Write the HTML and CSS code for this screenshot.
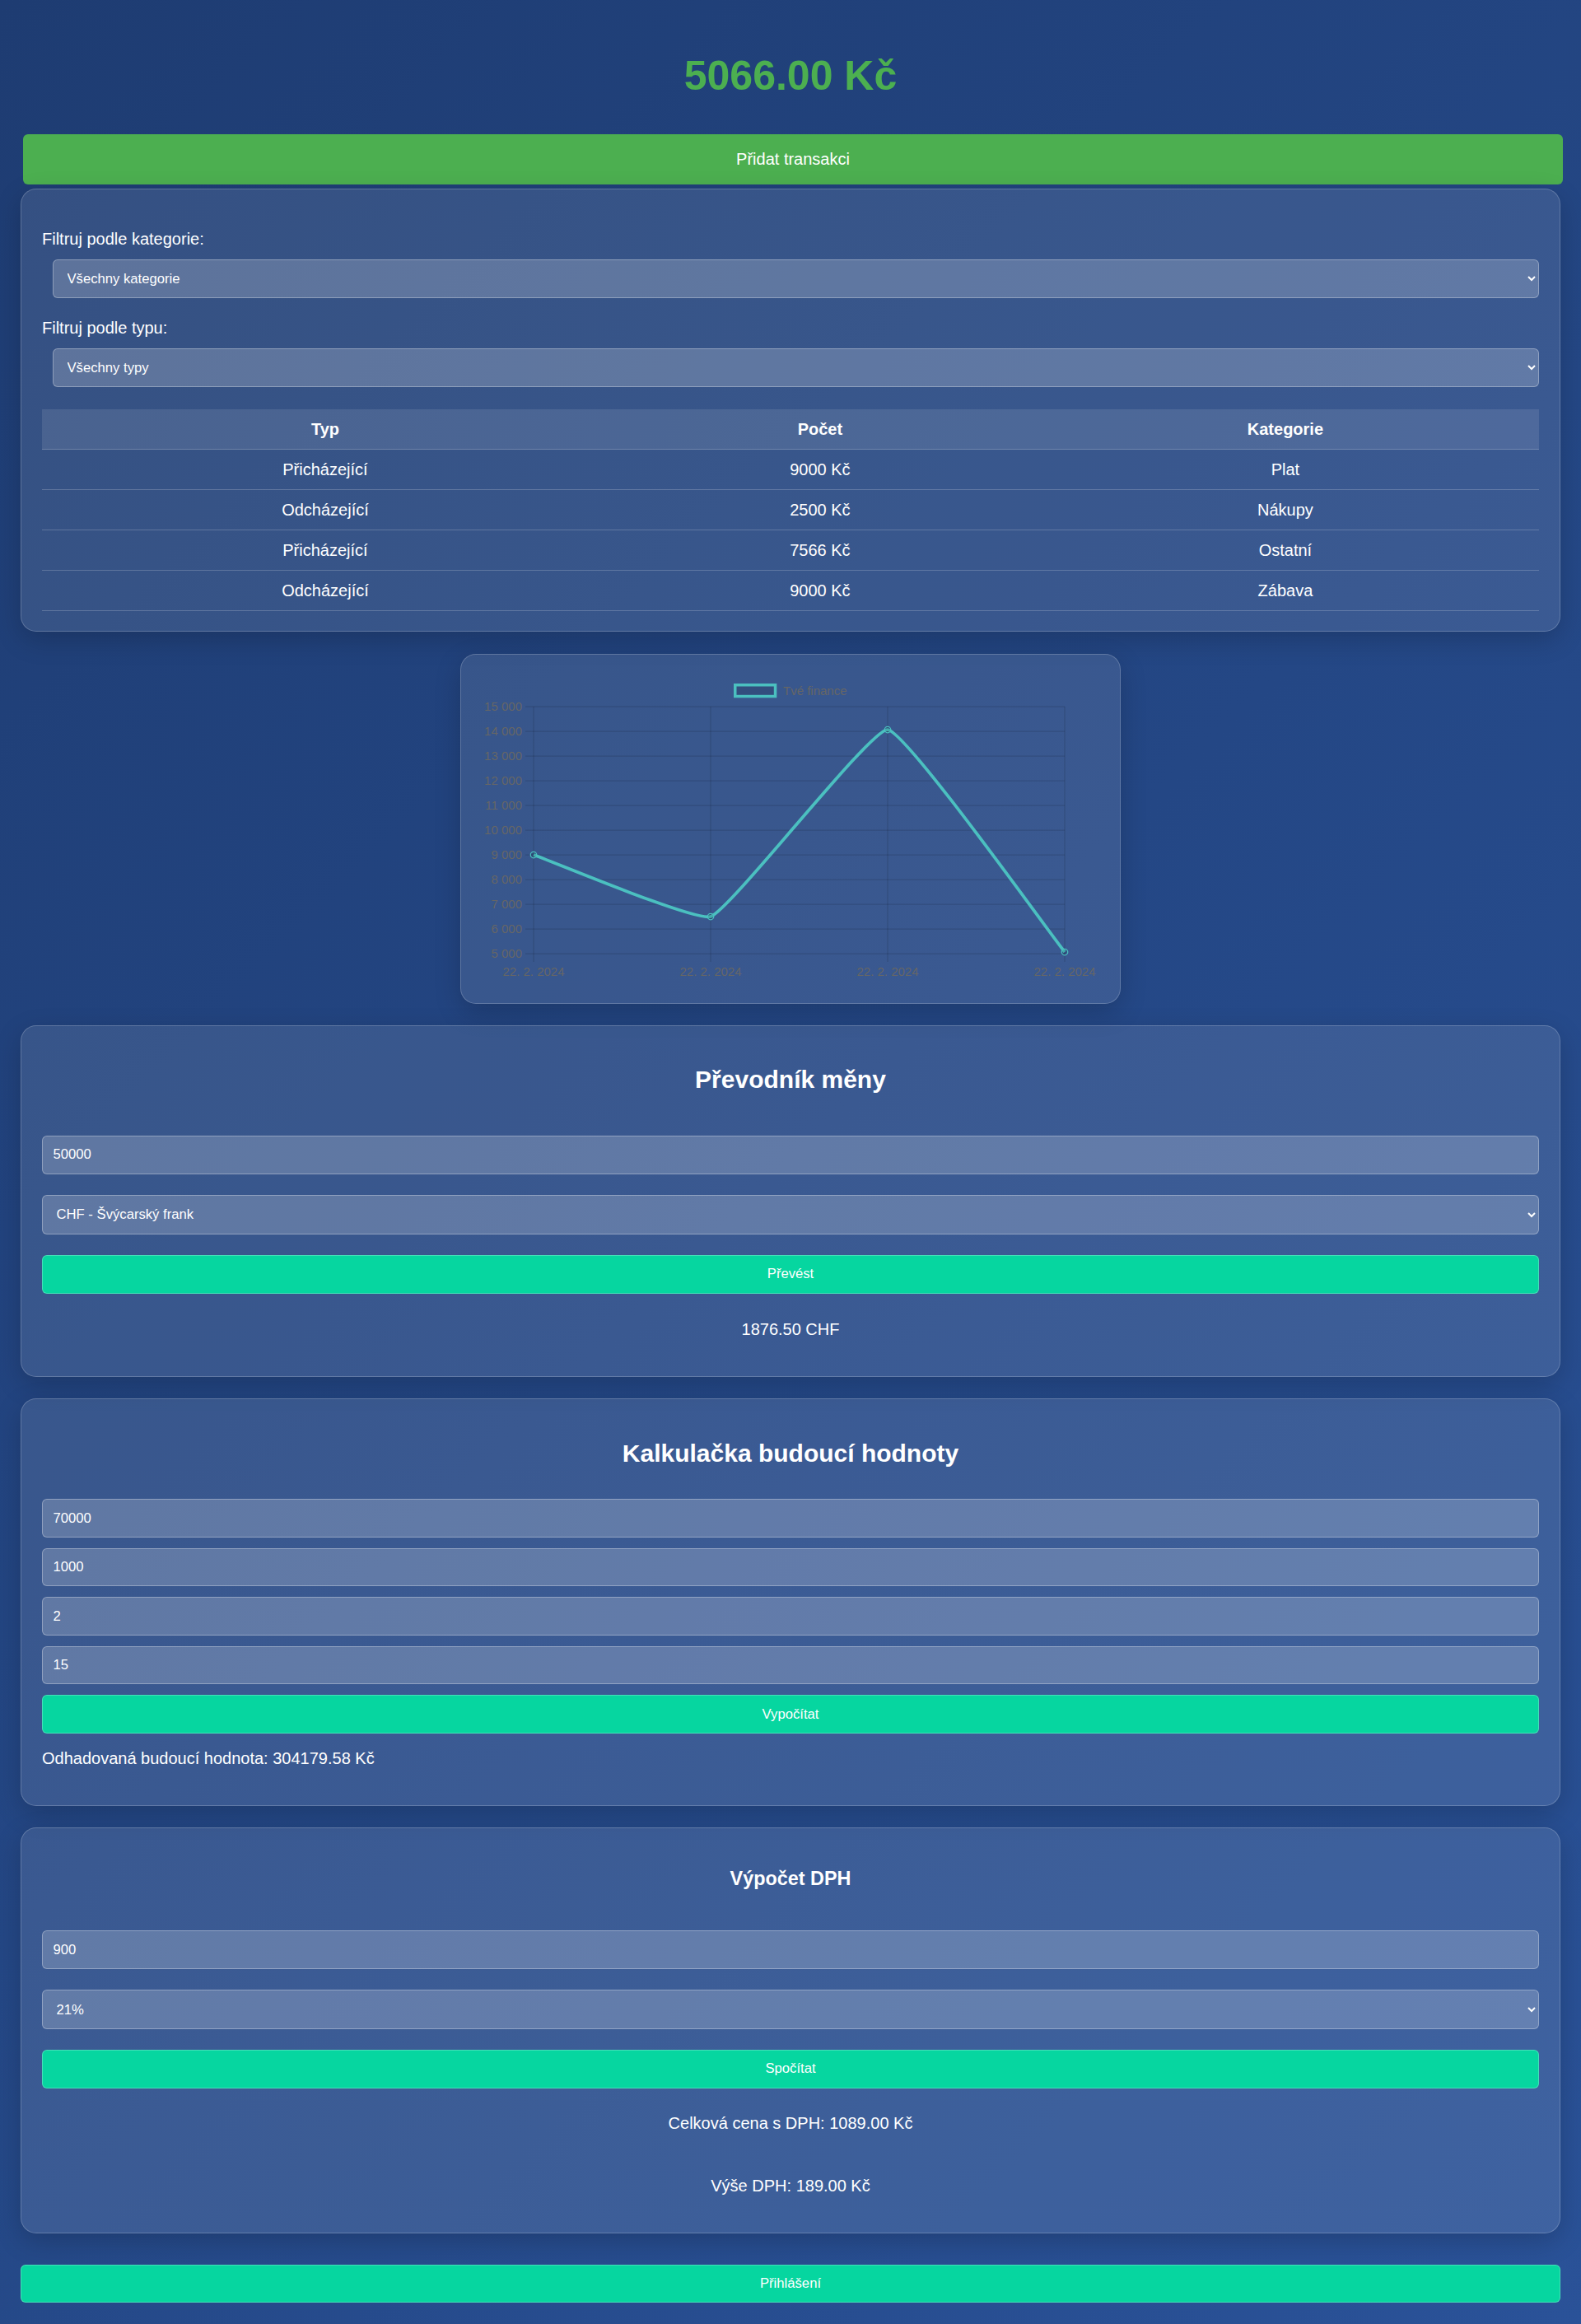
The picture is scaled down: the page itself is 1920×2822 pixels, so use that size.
FILE: index.html
```html
<!DOCTYPE html>
<html lang="cs">
<head>
<meta charset="utf-8">
<title>Moje finance</title>
<link rel="stylesheet" href="styles.css">
</head>
<body>
<main class="page">
  <h1 class="balance">5066.00 Kč</h1>
  <button class="btn-add" type="button">Přidat transakci</button>

  <section class="card filters">
    <label class="field-label" for="cat">Filtruj podle kategorie:</label>
    <select id="cat" class="filter-select"><option>Všechny kategorie</option></select>
    <label class="field-label second" for="typ">Filtruj podle typu:</label>
    <select id="typ" class="filter-select"><option>Všechny typy</option></select>
    <table class="tx">
      <colgroup><col class="c1"><col class="c2"><col class="c3"></colgroup>
      <thead>
        <tr><th>Typ</th><th>Počet</th><th>Kategorie</th></tr>
      </thead>
      <tbody>
        <tr><td>Přicházející</td><td>9000 Kč</td><td>Plat</td></tr>
        <tr><td>Odcházející</td><td>2500 Kč</td><td>Nákupy</td></tr>
        <tr><td>Přicházející</td><td>7566 Kč</td><td>Ostatní</td></tr>
        <tr><td>Odcházející</td><td>9000 Kč</td><td>Zábava</td></tr>
      </tbody>
    </table>
  </section>

  <section class="card chart-card">
    <svg class="chart" width="750" height="375" viewBox="0 0 750 375">
      <g class="grid">
        <line x1="53" y1="39" x2="708" y2="39"/>
        <line x1="53" y1="69" x2="708" y2="69"/>
        <line x1="53" y1="99" x2="708" y2="99"/>
        <line x1="53" y1="129" x2="708" y2="129"/>
        <line x1="53" y1="159" x2="708" y2="159"/>
        <line x1="53" y1="189" x2="708" y2="189"/>
        <line x1="53" y1="219" x2="708" y2="219"/>
        <line x1="53" y1="249" x2="708" y2="249"/>
        <line x1="53" y1="279" x2="708" y2="279"/>
        <line x1="53" y1="309" x2="708" y2="309"/>
        <line x1="53" y1="339" x2="708" y2="339"/>
        <line x1="63" y1="39" x2="63" y2="349"/>
        <line x1="278" y1="39" x2="278" y2="349"/>
        <line x1="493" y1="39" x2="493" y2="349"/>
        <line x1="708" y1="39" x2="708" y2="349"/>
      </g>
      <g class="ylabels">
        <text x="49" y="44.4">15 000</text>
        <text x="49" y="74.4">14 000</text>
        <text x="49" y="104.4">13 000</text>
        <text x="49" y="134.4">12 000</text>
        <text x="49" y="164.4">11 000</text>
        <text x="49" y="194.4">10 000</text>
        <text x="49" y="224.4">9 000</text>
        <text x="49" y="254.4">8 000</text>
        <text x="49" y="284.4">7 000</text>
        <text x="49" y="314.4">6 000</text>
        <text x="49" y="344.4">5 000</text>
      </g>
      <g class="xlabels">
        <text x="63" y="366">22. 2. 2024</text>
        <text x="278" y="366">22. 2. 2024</text>
        <text x="493" y="366">22. 2. 2024</text>
        <text x="708" y="366">22. 2. 2024</text>
      </g>
      <rect class="legend-box" x="307.75" y="12.75" width="48.8" height="13.8"/>
      <text class="legend-text" x="366" y="24.5">Tvé finance</text>
      <path class="series" d="M63 219 C84.5 226.5 259.88 300.4 278 294 C302.88 285.21 472.56 64.98 493 67.02 C515.56 69.28 686.5 310.02 708 337.02"/>
      <g class="points">
        <circle cx="63" cy="219" r="3.75"/>
        <circle cx="278" cy="294" r="3.75"/>
        <circle cx="493" cy="67.02" r="3.75"/>
        <circle cx="708" cy="337.02" r="3.75"/>
      </g>
    </svg>
  </section>

  <section class="card converter">
    <h2 class="card-title">Převodník měny</h2>
    <input class="field conv-input" type="text" value="50000">
    <select class="field select conv-select"><option>CHF - Švýcarský frank</option></select>
    <button class="btn-teal conv-btn" type="button">Převést</button>
    <p class="result center conv-result">1876.50 CHF</p>
  </section>

  <section class="card fv">
    <h2 class="card-title">Kalkulačka budoucí hodnoty</h2>
    <input class="field fv-first" type="text" value="70000">
    <input class="field fv-next" type="text" value="1000">
    <input class="field fv-next" type="text" value="2">
    <input class="field fv-next" type="text" value="15">
    <button class="btn-teal fv-btn" type="button">Vypočítat</button>
    <p class="result fv-result">Odhadovaná budoucí hodnota: 304179.58 Kč</p>
  </section>

  <section class="card vat">
    <h3 class="card-subtitle">Výpočet DPH</h3>
    <input class="field vat-input" type="text" value="900">
    <select class="field select vat-select"><option>21%</option></select>
    <button class="btn-teal vat-btn" type="button">Spočítat</button>
    <p class="result center vat-total">Celková cena s DPH: 1089.00 Kč</p>
    <p class="result center vat-amount">Výše DPH: 189.00 Kč</p>
  </section>

  <button class="btn-teal login-btn" type="button">Přihlášení</button>
</main>
</body>
</html>
```

FILE: styles.css
```css
* {
  box-sizing: border-box;
}

html {
  background: #1e3c72;
}

body {
  margin: 0;
  min-height: 2822px;
  background: linear-gradient(135deg, #1e3c72 0%, #2a5298 100%);
  font-family: "Liberation Sans", Arial, sans-serif;
  color: #fff;
}

.page {
  display: flex;
  flex-direction: column;
  padding: 0 25px 25.5px;
}

.balance {
  margin: 63px 0 42px;
  font-size: 50px;
  line-height: 58px;
  font-weight: 700;
  color: #4caf50;
  text-align: center;
}

.btn-add {
  margin: 0 -3px 0 3px;
  height: 61px;
  padding: 0;
  border: none;
  border-radius: 6px;
  background: #4caf50;
  color: #fff;
  font-family: "Liberation Sans", Arial, sans-serif;
  font-size: 20px;
  line-height: 23px;
}

.card {
  background: rgba(255, 255, 255, 0.1);
  border: 1px solid rgba(255, 255, 255, 0.2);
  border-radius: 19px;
  box-shadow: 0 10px 32px rgba(0, 0, 0, 0.18);
  padding: 25px;
}

/* filter card */
.filters {
  margin-top: 5px;
  padding-bottom: 24px;
}

.field-label {
  display: block;
  margin-top: 24px;
  font-size: 20px;
  line-height: 23px;
}

.field-label.second {
  margin-top: 25px;
}

.filter-select,
.field {
  display: block;
  border: 1px solid rgba(255, 255, 255, 0.3);
  border-radius: 6px;
  background-color: rgba(255, 255, 255, 0.2);
  color: #fff;
  font-family: "Liberation Sans", Arial, sans-serif;
  font-size: 16.67px;
  padding: 0 12.5px;
  outline: none;
}

.filter-select {
  margin: 13px 0 0 13px;
  width: calc(100% - 13px);
  height: 47px;
}

.field {
  width: 100%;
  height: 46.5px;
}

.field.select {
  height: 47.5px;
}

.tx {
  width: 100%;
  margin-top: 27px;
  border-collapse: collapse;
  table-layout: fixed;
}

.tx .c1 { width: 37.84%; }
.tx .c2 { width: 28.27%; }
.tx .c3 { width: 33.89%; }

.tx th,
.tx td {
  padding: 12.5px;
  font-size: 20px;
  line-height: 23px;
  text-align: center;
  border-bottom: 1px solid rgba(255, 255, 255, 0.2);
}

.tx th {
  background: rgba(255, 255, 255, 0.1);
  font-weight: 700;
}

/* chart */
.chart-card {
  align-self: center;
  margin-top: 27px;
  width: 802px;
  padding: 24px 25px;
}

.chart {
  display: block;
}

.chart .grid line {
  stroke: rgba(0, 0, 0, 0.13);
  stroke-width: 1.25;
}

.chart text {
  font-family: "Liberation Sans", Arial, sans-serif;
  font-size: 15px;
  fill: #666;
}

.chart .ylabels text {
  text-anchor: end;
}

.chart .xlabels text {
  text-anchor: middle;
}

.chart .legend-box {
  fill: rgba(0, 0, 0, 0.1);
  stroke: rgb(75, 192, 192);
  stroke-width: 3.5;
}

.chart .series {
  fill: none;
  stroke: rgb(75, 192, 192);
  stroke-width: 3.75;
  stroke-linejoin: round;
}

.chart .points circle {
  fill: rgba(0, 0, 0, 0.1);
  stroke: rgb(75, 192, 192);
  stroke-width: 1.25;
}

/* generic card parts */
.card-title {
  margin: 0;
  font-size: 30px;
  line-height: 34px;
  font-weight: 700;
  text-align: center;
}

.card-subtitle {
  margin: 22.4px 0 0;
  font-size: 23.4px;
  line-height: 27px;
  font-weight: 700;
  text-align: center;
}

.btn-teal {
  display: block;
  width: 100%;
  height: 46.7px;
  padding: 0;
  border: 1px solid rgba(255, 255, 255, 0.25);
  border-radius: 6px;
  background: #06d6a0;
  color: #fff;
  font-family: "Liberation Sans", Arial, sans-serif;
  font-size: 16.67px;
}

.result {
  margin: 0 0 20px;
  font-size: 20px;
  line-height: 23px;
}

.result.center {
  text-align: center;
}

/* converter */
.converter {
  margin-top: 26px;
}

.converter .card-title {
  margin-top: 23px;
}

.conv-input {
  margin-top: 51px;
}

.conv-select {
  margin-top: 25.5px;
}

.conv-btn {
  margin-top: 25.5px;
}

.conv-result {
  margin-top: 32.3px;
}

/* future value */
.fv {
  margin-top: 26px;
}

.fv .card-title {
  margin-top: 24px;
}

.fv-first {
  margin-top: 38.5px;
}

.fv-next {
  margin-top: 13px;
}

.fv-btn {
  margin-top: 13px;
}

.fv-result {
  margin-top: 19px;
}

/* VAT */
.vat {
  margin-top: 26px;
}

.vat-input {
  margin-top: 49.7px;
}

.vat-select {
  margin-top: 25.5px;
}

.vat-btn {
  margin-top: 25.2px;
}

.vat-total {
  margin-top: 31.2px;
}

.vat-amount {
  margin-top: 52.9px;
}

.login-btn {
  margin-top: 38px;
}
```
